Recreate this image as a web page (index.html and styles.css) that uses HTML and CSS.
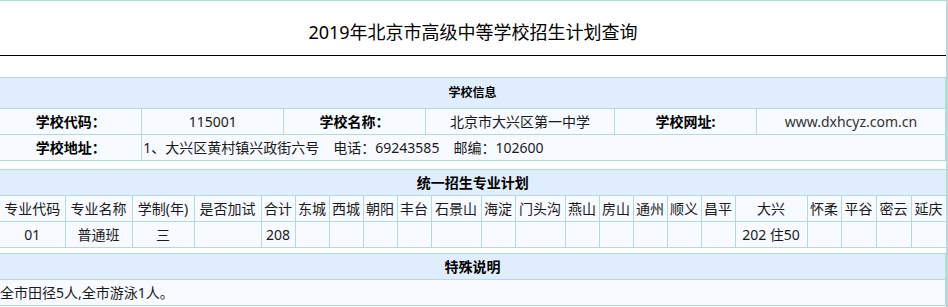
FILE: index.html
```html
<!DOCTYPE html>
<html lang="zh-CN">
<head>
<meta charset="utf-8">
<title>2019年北京市高级中等学校招生计划查询</title>
<link rel="stylesheet" href="styles.css">
</head>
<body>
<div class="page">
  <div class="title-bar"><span class="title">2019年北京市高级中等学校招生计划查询</span></div>
  <div class="tables">
    <table class="grid info">
      <colgroup>
        <col class="p15"><col class="p15"><col class="p15"><col class="p20"><col class="p15"><col class="p20">
      </colgroup>
      <tr class="r-head"><th colspan="6">学校信息</th></tr>
      <tr class="r-body">
        <td class="lbl">学校代码：</td>
        <td>115001</td>
        <td class="lbl">学校名称：</td>
        <td>北京市大兴区第一中学</td>
        <td class="lbl">学校网址:</td>
        <td class="url">www.dxhcyz.com.cn</td>
      </tr>
      <tr class="r-body">
        <td class="lbl">学校地址：</td>
        <td colspan="5" class="left">1、大兴区黄村镇兴政街六号　电话：69243585　邮编：102600</td>
      </tr>
    </table>

    <table class="grid plan">
      <colgroup>
        <col class="w65"><col class="w67"><col class="w62"><col class="w67">
        <col class="w34"><col class="w34"><col class="w34"><col class="w34"><col class="w34">
        <col class="w50"><col class="w34"><col class="w50">
        <col class="w34"><col class="w34"><col class="w34"><col class="w34"><col class="w34">
        <col class="w72"><col class="w34"><col class="w35"><col class="w35"><col class="w35">
      </colgroup>
      <tr class="r-head"><th colspan="22">统一招生专业计划</th></tr>
      <tr class="r-body">
        <td>专业代码</td><td>专业名称</td><td>学制(年)</td><td>是否加试</td>
        <td>合计</td><td>东城</td><td>西城</td><td>朝阳</td><td>丰台</td>
        <td>石景山</td><td>海淀</td><td>门头沟</td><td>燕山</td><td>房山</td>
        <td>通州</td><td>顺义</td><td>昌平</td><td>大兴</td><td>怀柔</td>
        <td>平谷</td><td>密云</td><td>延庆</td>
      </tr>
      <tr class="r-body">
        <td>01</td><td>普通班</td><td>三</td><td></td>
        <td>208</td><td></td><td></td><td></td><td></td>
        <td></td><td></td><td></td><td></td><td></td>
        <td></td><td></td><td></td><td>202 住50</td><td></td>
        <td></td><td></td><td></td>
      </tr>
    </table>

    <table class="grid note">
      <tr class="r-head"><th>特殊说明</th></tr>
      <tr class="r-body"><td class="left">全市田径5人,全市游泳1人。</td></tr>
    </table>
  </div>
</div>
</body>
</html>
```
FILE: styles.css
```css
html, body {
  margin: 0;
  padding: 0;
  background: #ffffff;
}

body {
  font-family: "Noto Sans", "Noto Sans CJK SC", sans-serif;
  color: #1a1a1a;
}

.page {
  width: 946px;
  height: 306px;
  border-top: 1px solid #b4dcd6;
  border-right: 2px solid #b4dcd6;
  display: flex;
  flex-direction: column;
  overflow: hidden;
}

.title-bar {
  height: 54px;
  border-bottom: 1px solid #000000;
  display: flex;
  align-items: center;
  justify-content: center;
  flex-shrink: 0;
}

.title {
  font-family: "Noto Sans", "Noto Sans CJK SC", sans-serif;
  font-size: 18px;
  line-height: 22px;
  color: #000;
  white-space: nowrap;
  margin-top: 7px;
}

.tables {
  display: flex;
  flex-direction: column;
  padding-top: 21px;
}

.grid {
  width: 946px;
  border-collapse: collapse;
  table-layout: fixed;
  border: 1px solid #b4dcd6;
  border-left: 0;
}

.grid th,
.grid td {
  border: 1px solid #b4dcd6;
  padding: 0;
  text-align: center;
  vertical-align: middle;
  white-space: nowrap;
  overflow: hidden;
  font-size: 14px;
  line-height: 18px;
}

.grid tr > :first-child {
  border-left: 0;
}

.grid th {
  background: #e0edfc;
  font-weight: bold;
  color: #000;
}

.grid td {
  background: #f7fbff;
  color: #1a1a1a;
}

.r-head { height: 26px; }
.r-body { height: 26px; }

.info .r-head { height: 31px; }
.info th { font-size: 12px; }

.plan { margin-top: 8px; }
.note { margin-top: 5px; }

.lbl {
  font-weight: bold;
  color: #000 !important;
}

.url { color: #333 !important; }

.left {
  text-align: left !important;
  padding-left: 1px !important;
}

.note .left { padding-left: 0 !important; }

.p15 { width: 15%; }
.p20 { width: 20%; }

.w34 { width: 34px; }
.w35 { width: 35px; }
.w50 { width: 50px; }
.w62 { width: 62px; }
.w65 { width: 65px; }
.w67 { width: 67px; }
.w72 { width: 72px; }
```
